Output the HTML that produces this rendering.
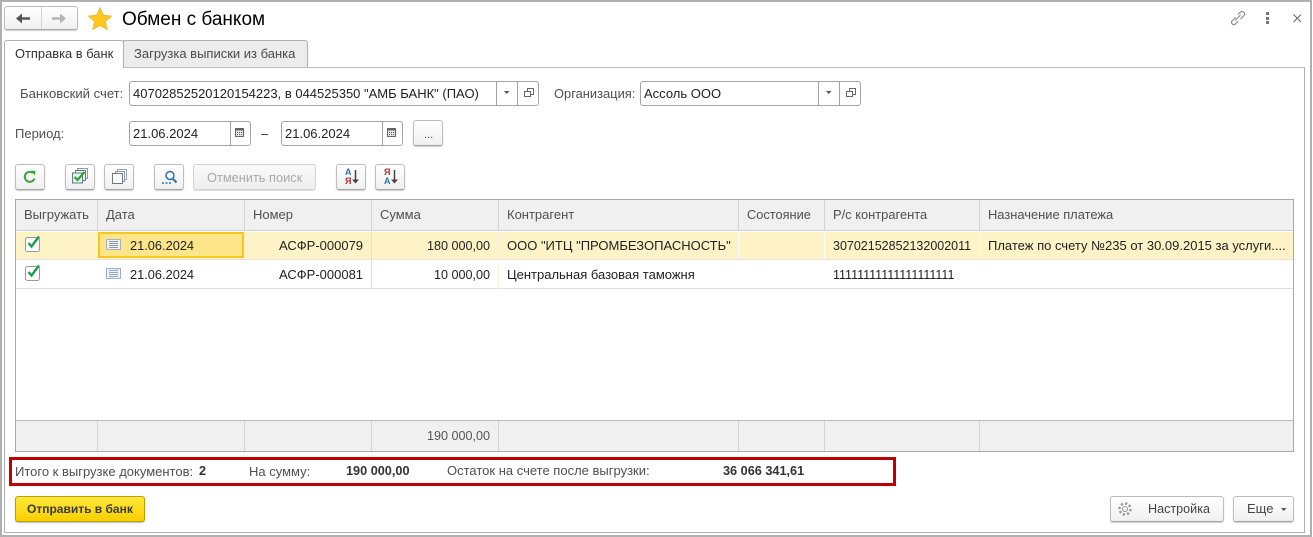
<!DOCTYPE html>
<html lang="ru"><head><meta charset="utf-8"><title>Обмен с банком</title>
<style>
html,body{margin:0;padding:0;background:#fff}
body{position:relative;width:1313px;height:537px;overflow:hidden;font:13px/16px "Liberation Sans",Arial,sans-serif;color:#333}
.a{position:absolute;box-sizing:border-box}
.t{position:absolute;white-space:nowrap}
.l{color:#4f4f4f}
.n{font-size:12.6px}
.b{font-size:12.7px;font-weight:bold}
.btn{position:absolute;box-sizing:border-box;border:1px solid #bdbdbd;border-bottom-color:#a5a5a5;border-radius:3px;background:linear-gradient(#fff,#f0f0f0);box-shadow:0 1px 1px #ccc}
.fld{position:absolute;box-sizing:border-box;height:25px;border:1px solid #a3a3a3;border-radius:3px;background:#fff}
.v{position:absolute;top:0;bottom:0;width:1px;background:#a3a3a3}
.c{position:absolute;width:1px;background:#d4d4d4}
svg{position:absolute;overflow:visible}
</style></head><body>
<!-- frames -->
<div class="a" style="left:0;top:0;width:1312px;height:537px;border:2px solid #b0b0b0"></div>
<div class="a" style="left:4px;top:67px;width:1301px;height:466px;border:1px solid #b0b0b0;border-top-color:#bdbdbd"></div>

<!-- nav -->
<div class="btn" style="left:4px;top:6px;width:74px;height:24px"></div>
<div class="a" style="left:41px;top:7px;width:1px;height:22px;background:#d4d4d4"></div>
<svg style="left:0;top:0" width="80" height="30"><path d="M20 18.500h10" stroke="#555" stroke-width="2.500" fill="none"/><path d="M22 13.500L16 18.500l6 5z" fill="#555"/><path d="M52 18.500h10" stroke="#b5b5b5" stroke-width="2.500" fill="none"/><path d="M60 13.500l6 5-6 5z" fill="#b5b5b5"/></svg>
<svg style="left:88px;top:7px" width="24" height="24" viewBox="0 0 24 24"><path d="M12 0.500l3.400 7.700 8.300.8-6.300 5.500 1.900 8.200L12 18.400l-7.300 4.300 1.900-8.200L.3 9l8.300-.8z" fill="#fdc81e" stroke="#e7ae12" stroke-width=".6"/></svg>
<div class="t" style="left:122px;top:9px;font-size:19px;line-height:22px;color:#000">Обмен с банком</div>
<svg style="left:1229px;top:9px" width="18" height="18" fill="none" stroke="#888" stroke-width="1.100"><path d="M6.500 8.500L3 12a2.300 2.300 0 0 0 3.200 3.200l3-3"/><path d="M9 5.500l2.500-2.500a2.500 2.500 0 0 1 3.500 3.500l-3.500 3.500"/><path d="M6 11.500l5.500-5.500"/></svg>
<div class="a" style="left:1266px;top:12px;width:3px;height:3px;background:#777"></div>
<div class="a" style="left:1266px;top:16.500px;width:3px;height:3px;background:#777"></div>
<div class="a" style="left:1266px;top:21px;width:3px;height:3px;background:#777"></div>
<svg style="left:1293px;top:14px" width="10" height="10" stroke="#666" stroke-width="1"><path d="M.5.500l7.500 7.500M8 .5l-7.500 7.500"/></svg>

<!-- tabs -->
<div class="a" style="left:4px;top:40px;width:120px;height:28px;background:#fff;border:1px solid #b0b0b0;border-bottom:none;border-radius:3px 3px 0 0;z-index:2"></div>
<div class="t" style="left:15px;top:46px;z-index:3;color:#333;font-size:12.900px">Отправка в банк</div>
<div class="a" style="left:123px;top:40px;width:185px;height:27px;background:#ececec;border:1px solid #b0b0b0;border-bottom:none;border-radius:0 3px 0 0"></div>
<div class="t" style="left:134px;top:46px;color:#4a4a4a">Загрузка выписки из банка</div>

<!-- row 1 -->
<div class="t l" style="left:20px;top:86px;font-size:13.100px">Банковский счет:</div>
<div class="fld" style="left:129px;top:81px;width:410px"><div class="v" style="left:366px"></div><div class="v" style="left:387px"></div></div>
<div class="t" style="left:133px;top:86px;color:#222">40702852520120154223, в 044525350 "АМБ БАНК" (ПАО)</div>
<svg style="left:504px;top:91px" width="6" height="4"><path d="M0 0h5.500L2.750 3z" fill="#555"/></svg>
<svg style="left:524px;top:88px" width="11" height="11" fill="none" stroke="#666"><path d="M3.500 3V.5h6v6H7M.5 3.500h6v5h-6z"/></svg>
<div class="t l" style="left:554px;top:86px;font-size:12.900px">Организация:</div>
<div class="fld" style="left:640px;top:81px;width:221px"><div class="v" style="left:177px"></div><div class="v" style="left:198px"></div></div>
<div class="t" style="left:644px;top:86px;color:#222">Ассоль ООО</div>
<svg style="left:826px;top:91px" width="6" height="4"><path d="M0 0h5.500L2.750 3z" fill="#555"/></svg>
<svg style="left:846px;top:88px" width="11" height="11" fill="none" stroke="#666"><path d="M3.500 3V.5h6v6H7M.5 3.500h6v5h-6z"/></svg>

<!-- row 2 -->
<div class="t l" style="left:15px;top:126px">Период:</div>
<div class="fld" style="left:129px;top:121px;width:122px"><div class="v" style="left:100px"></div></div>
<div class="t" style="left:133px;top:126px;color:#222">21.06.2024</div>
<svg style="left:235px;top:127px" width="10" height="10"><path d="M0 1h9v9H0z" fill="#666"/><path d="M1 3.500h7V9H1z" fill="#e6e6e6"/><path d="M2 5h1v1H2zM4 5h1v1H4zM6 5h1v1H6zM2 7h1v1H2zM4 7h1v1H4zM6 7h1v1H6z" fill="#555"/></svg>
<div class="t" style="left:261px;top:126px;color:#333">–</div>
<div class="fld" style="left:281px;top:121px;width:122px"><div class="v" style="left:100px"></div></div>
<div class="t" style="left:285px;top:126px;color:#222">21.06.2024</div>
<svg style="left:387px;top:127px" width="10" height="10"><path d="M0 1h9v9H0z" fill="#666"/><path d="M1 3.500h7V9H1z" fill="#e6e6e6"/><path d="M2 5h1v1H2zM4 5h1v1H4zM6 5h1v1H6zM2 7h1v1H2zM4 7h1v1H4zM6 7h1v1H6z" fill="#555"/></svg>
<div class="btn" style="left:413px;top:120px;width:30px;height:26px"></div>
<div class="t" style="left:424px;top:127px;color:#555;font-size:11px">...</div>

<!-- toolbar -->
<div class="btn" style="left:15px;top:164px;width:30px;height:26px"></div>
<svg style="left:22px;top:169px" width="16" height="16" fill="none"><path d="M12.500 9.500A5 5 0 1 1 11 4" stroke="#3ca33a" stroke-width="2"/><path d="M9 1.500l4.500.5-.5 4.500z" fill="#3ca33a"/></svg>
<div class="btn" style="left:65px;top:164px;width:30px;height:26px"></div>
<svg style="left:72px;top:168px" width="17" height="17" fill="none" stroke="#5d7c86"><path d="M5.500 3V.5h10v10H13" stroke="#8aa0a8"/><path d="M3.500 5V2.500h10v10H11"/><path d="M.5 5h10v10H.5z" fill="#e8f0f2"/><path d="M2.500 9l3 3 7-8" stroke="#2fa52f" stroke-width="2.200"/></svg>
<div class="btn" style="left:104px;top:164px;width:30px;height:26px"></div>
<svg style="left:112px;top:169px" width="16" height="16" fill="none" stroke="#6b7b82"><path d="M5.500 2.500V.5h9v10h-2" stroke="#9aa8ae"/><path d="M3.500 4.500v-2h9v10h-2" stroke="#8a9aa0"/><path d="M.5 4.500h10v10H.5z" fill="#fff"/></svg>
<div class="btn" style="left:154px;top:164px;width:30px;height:26px"></div>
<svg style="left:161px;top:170px" width="17" height="15" fill="none" stroke="#2f72a8"><circle cx="9" cy="5.500" r="4" stroke-width="1.500"/><path d="M12 9l3.500 3.500" stroke-width="2"/><path d="M1 13h2M4.500 13h2M8 13h2" stroke-width="1.500"/></svg>
<div class="btn" style="left:193px;top:164px;width:123px;height:26px;border-color:#d4d4d4;background:linear-gradient(#fafafa,#eee);box-shadow:0 1px 0 #ddd"></div>
<div class="t" style="left:207px;top:170px;color:#a8a8a8;font-size:12.800px">Отменить поиск</div>
<div class="btn" style="left:336px;top:164px;width:30px;height:26px"></div>
<div class="t" style="left:345px;top:167px;font-size:9px;line-height:10px;color:#2f72b8;font-weight:bold">А</div>
<div class="t" style="left:345px;top:176px;font-size:9px;line-height:10px;color:#b03030;font-weight:bold">Я</div>
<svg style="left:351px;top:169px" width="10" height="16"><path d="M4.500 1v11" stroke="#444" stroke-width="1.500"/><path d="M1 10.500h7l-3.500 4z" fill="#444"/></svg>
<div class="btn" style="left:375px;top:164px;width:30px;height:26px"></div>
<div class="t" style="left:384px;top:167px;font-size:9px;line-height:10px;color:#b03030;font-weight:bold">Я</div>
<div class="t" style="left:384px;top:176px;font-size:9px;line-height:10px;color:#2f72b8;font-weight:bold">А</div>
<svg style="left:390px;top:169px" width="10" height="16"><path d="M4.500 1v11" stroke="#444" stroke-width="1.500"/><path d="M1 10.500h7l-3.500 4z" fill="#444"/></svg>

<!-- table -->
<div class="a" style="left:15px;top:199px;width:1279px;height:253px;border:1px solid #a8a8a8;background:#fff"></div>
<div class="a" style="left:16px;top:200px;width:1277px;height:30px;background:#f0f0f0"></div>
<div class="a" style="left:16px;top:230px;width:1277px;height:1px;background:#d0d0d0"></div>
<div class="a" style="left:16px;top:232px;width:1277px;height:27px;background:#fdf3c6"></div>
<div class="a" style="left:16px;top:259px;width:1277px;height:1px;background:#e4e4e4"></div>
<div class="a" style="left:16px;top:288px;width:1277px;height:1px;background:#e0e0e0"></div>
<div class="a" style="left:16px;top:420px;width:1277px;height:1px;background:#b8b8b8"></div>
<div class="a" style="left:16px;top:421px;width:1277px;height:30px;background:#f0f0f0"></div>

<div class="c" style="left:97px;top:200px;height:30px"></div>
<div class="c" style="left:244px;top:200px;height:30px"></div>
<div class="c" style="left:371px;top:200px;height:30px"></div>
<div class="c" style="left:498px;top:200px;height:30px"></div>
<div class="c" style="left:738px;top:200px;height:30px"></div>
<div class="c" style="left:824px;top:200px;height:30px"></div>
<div class="c" style="left:979px;top:200px;height:30px"></div>

<div class="c" style="left:371px;top:232px;height:57px;background:#e0e0e0"></div>
<div class="c" style="left:498px;top:232px;height:57px;background:#f7f3e2"></div>
<div class="c" style="left:738px;top:232px;height:27px;background:#fff"></div>
<div class="c" style="left:824px;top:232px;height:27px;background:#fff"></div>
<div class="c" style="left:979px;top:232px;height:27px;background:#fff"></div>

<div class="c" style="left:97px;top:421px;height:30px"></div>
<div class="c" style="left:244px;top:421px;height:30px"></div>
<div class="c" style="left:371px;top:421px;height:30px"></div>
<div class="c" style="left:498px;top:421px;height:30px"></div>
<div class="c" style="left:738px;top:421px;height:30px"></div>
<div class="c" style="left:824px;top:421px;height:30px"></div>
<div class="c" style="left:979px;top:421px;height:30px"></div>

<div class="t l" style="left:24px;top:207px">Выгружать</div>
<div class="t l" style="left:106px;top:207px">Дата</div>
<div class="t l" style="left:253px;top:207px">Номер</div>
<div class="t l" style="left:380px;top:207px">Сумма</div>
<div class="t l" style="left:507px;top:207px">Контрагент</div>
<div class="t l" style="left:747px;top:207px;font-size:12.800px">Состояние</div>
<div class="t l" style="left:833px;top:207px;font-size:12.900px">Р/с контрагента</div>
<div class="t l" style="left:988px;top:207px;font-size:12.900px">Назначение платежа</div>

<!-- row A -->
<div class="a" style="left:98px;top:232px;width:146px;height:26px;background:#fde58a;border:2px solid #fbc41e"></div>
<svg style="left:25px;top:235px" width="18" height="18" fill="none"><rect x=".5" y="2.500" width="14" height="14" rx="2" fill="#fff" stroke="#9a9a9a"/><path d="M3.500 8l3 3.500L14 1.500" stroke="#17a050" stroke-width="2.400"/></svg>
<svg style="left:106px;top:239px" width="15" height="11"><rect x=".5" y=".5" width="14" height="10" fill="#eef0f2" stroke="#a8b0b8"/><path d="M3 2.500h9M3 4.500h9M3 6.500h9M3 8.500h9" stroke="#8a9bb0"/></svg>
<div class="t n" style="left:130px;top:238px;color:#222;font-size:12.800px">21.06.2024</div>
<div class="t" style="left:279px;top:238px;color:#222">АСФР-000079</div>
<div class="t n" style="right:823px;top:238px;color:#222">180 000,00</div>
<div class="t" style="left:507px;top:238px;color:#222">ООО "ИТЦ "ПРОМБЕЗОПАСНОСТЬ"</div>
<div class="t" style="left:833px;top:238px;color:#222;font-size:12.500px">30702152852132002011</div>
<div class="t" style="left:988px;top:238px;color:#222">Платеж по счету №235 от 30.09.2015 за услуги....</div>

<!-- row B -->
<svg style="left:25px;top:264px" width="18" height="18" fill="none"><rect x=".5" y="2.500" width="14" height="14" rx="2" fill="#fff" stroke="#9a9a9a"/><path d="M3.500 8l3 3.500L14 1.500" stroke="#17a050" stroke-width="2.400"/></svg>
<svg style="left:106px;top:268px" width="15" height="11"><rect x=".5" y=".5" width="14" height="10" fill="#eef3f8" stroke="#9ab0c4"/><path d="M3 2.500h9M3 4.500h9M3 6.500h9M3 8.500h9" stroke="#8fa8c4"/></svg>
<div class="t n" style="left:130px;top:267px;color:#222;font-size:12.800px">21.06.2024</div>
<div class="t" style="left:279px;top:267px;color:#222">АСФР-000081</div>
<div class="t n" style="right:823px;top:267px;color:#222">10 000,00</div>
<div class="t" style="left:507px;top:267px;color:#222">Центральная базовая таможня</div>
<div class="t" style="left:833px;top:267px;color:#222;font-size:12.500px">11111111111111111111</div>

<div class="t n" style="right:823px;top:428px;color:#555">190 000,00</div>

<!-- summary -->
<div class="a" style="left:9px;top:457px;width:887px;height:29px;border:3px solid #c00000"></div>
<div class="t l" style="left:15px;top:464px">Итого к выгрузке документов:</div>
<div class="t b" style="left:199px;top:463px">2</div>
<div class="t l" style="left:249px;top:464px">На сумму:</div>
<div class="t b" style="left:346px;top:463px">190 000,00</div>
<div class="t l" style="left:447px;top:463px">Остаток на счете после выгрузки:</div>
<div class="t b" style="left:723px;top:463px">36 066 341,61</div>

<!-- bottom -->
<div class="a" style="left:15px;top:496px;width:130px;height:26px;border:1px solid #bba100;border-radius:3px;background:linear-gradient(#ffe83a,#f7cf00);box-shadow:0 1px 1px #bbb"></div>
<div class="t" style="left:27px;top:501px;font-weight:bold;font-size:12px;color:#3a3a3a">Отправить в банк</div>
<div class="btn" style="left:1110px;top:496px;width:114px;height:26px"></div>
<svg style="left:1117px;top:501px" width="16" height="16" fill="none" stroke="#999" stroke-width="1"><circle cx="8" cy="8" r="2.500"/><circle cx="8" cy="8" r="5.500" stroke-width="2.500" stroke-dasharray="2.200 2.100"/></svg>
<div class="t" style="left:1148px;top:501px;color:#444;font-size:12.600px">Настройка</div>
<div class="btn" style="left:1233px;top:496px;width:61px;height:26px"></div>
<div class="t" style="left:1247px;top:501px;color:#444">Еще</div>
<svg style="left:1281px;top:508px" width="6" height="4"><path d="M0 0h5.500L2.750 3z" fill="#555"/></svg>
</body></html>
